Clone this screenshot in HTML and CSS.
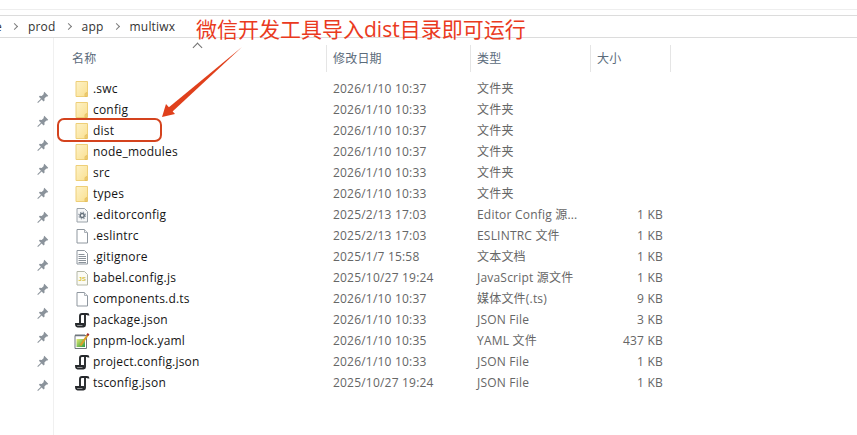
FILE: index.html
```html
<!DOCTYPE html>
<html lang="en">
<head>
    <meta charset="UTF-8">
    <meta name="viewport" content="width=device-width, initial-scale=1.0">
    <title>multiwx</title>
    <link rel="stylesheet" href="styles.css">
</head>
<body>

<svg class="defs" aria-hidden="true">
    <defs>
        <linearGradient id="folder-fill" x1="0" y1="0" x2="1" y2="1">
            <stop offset="0" stop-color="#fdf2c8"/>
            <stop offset="1" stop-color="#fae090"/>
        </linearGradient>
        <linearGradient id="note-fill" x1="0" y1="0" x2="1" y2="1">
            <stop offset="0" stop-color="#e2ec70"/>
            <stop offset="1" stop-color="#2f9a45"/>
        </linearGradient>
        <symbol id="i-folder" viewBox="0 0 16 16">
            <path d="M1.500 .5h11.500v15h-11.500z" fill="url(#folder-fill)" stroke="#eecf78"/>
            <path d="M12.500 11.500v4h-2v-3z" fill="#f2d27c" stroke="#e3bd5c" stroke-width=".8"/>
        </symbol>
        <symbol id="i-doc" viewBox="0 0 16 16">
            <path d="M2.500 1.500h7.500l3 3v10.500h-10.500z" fill="#fff" stroke="#8f979f"/>
            <path d="M10 1.500v3h3" fill="#eef0f2" stroke="#aab0b6"/>
        </symbol>
        <symbol id="i-text" viewBox="0 0 16 16">
            <path d="M2.500 1.500h7.500l3 3v10.500h-10.500z" fill="#fff" stroke="#8f979f"/>
            <path d="M4 5.500h6M4 7.500h7.500M4 9.500h7.500M4 11.500h7.500M4 13.500h7.500" stroke="#8a929a"/>
        </symbol>
        <symbol id="i-gear" viewBox="0 0 16 16">
            <path d="M2.500 1.500h7.500l3 3v10.500h-10.500z" fill="#f6f7f8" stroke="#9aa2a9"/>
            <circle cx="7.700" cy="8.500" r="2" fill="none" stroke="#66717c" stroke-width="1.500"/>
            <circle cx="7.700" cy="8.500" r="3.400" fill="none" stroke="#8a95a0" stroke-width="1.100" stroke-dasharray="1.300 1.400"/>
        </symbol>
        <symbol id="i-js" viewBox="0 0 16 16">
            <path d="M2.500 1.500h7.500l3 3v10.500h-10.500z" fill="#fbfbf4" stroke="#b4b8a8"/>
            <text x="7.800" y="11" class="js-mark">JS</text>
        </symbol>
        <symbol id="i-json" viewBox="0 0 16 16">
            <path d="M5.500 11.500v-7.500q0-2 2-2h5q1.500 0 1.500 1.500" fill="none" stroke="#26292c" stroke-width="1.900"/>
            <path d="M10.500 2.500v10.500q0 1.500-1.500 1.500h-6q-1.500 0-1.500-2.500h7q0 1 1 1" fill="#fff" stroke="#26292c" stroke-width="1.900"/>
        </symbol>
        <symbol id="i-yaml" viewBox="0 0 16 16">
            <path d="M.5 2.500h11.500v13h-11.500z" fill="#fff" stroke="#6f767c"/>
            <path d="M1.500 1v2.500M3.500 1v2.500M5.500 1v2.500M7.500 1v2.500M9.500 1v2.500" stroke="#6f767c"/>
            <path d="M2 6h8.500v8h-8.500z" fill="url(#note-fill)"/>
            <path d="M6 12.500l7.500-11" stroke="#d9a02c" stroke-width="2.200"/>
            <path d="M12.800 2.500l1.200-1.800" stroke="#a52c2c" stroke-width="2.200"/>
        </symbol>
        <symbol id="i-pin" viewBox="0 0 12 12">
            <path d="M7.300.8l3.900 3.900-1.100 1-.7-.2-2 2.100.2 1.900-1 .9-2-2-3.600 3.600-.7-.7 3.600-3.600-2-2 .9-1 1.900.2 2.100-2-.2-.7z" fill="#8b939b"/>
        </symbol>
    </defs>
</svg>

<div class="ribbon"></div>
<div class="tabs-gap"></div>
<div class="crumbs">
    <span>e</span><span class="sep"></span>
    <span>prod</span><span class="sep"></span>
    <span>app</span><span class="sep"></span>
    <span>multiwx</span>
</div>

<div class="main">
    <div class="quick">
        <svg class="pin"><use href="#i-pin"/></svg>
        <svg class="pin"><use href="#i-pin"/></svg>
        <svg class="pin"><use href="#i-pin"/></svg>
        <svg class="pin"><use href="#i-pin"/></svg>
        <svg class="pin"><use href="#i-pin"/></svg>
        <svg class="pin"><use href="#i-pin"/></svg>
        <svg class="pin"><use href="#i-pin"/></svg>
        <svg class="pin"><use href="#i-pin"/></svg>
        <svg class="pin"><use href="#i-pin"/></svg>
        <svg class="pin"><use href="#i-pin"/></svg>
        <svg class="pin"><use href="#i-pin"/></svg>
        <svg class="pin"><use href="#i-pin"/></svg>
        <svg class="pin"><use href="#i-pin"/></svg>
    </div>

    <div class="list">
        <div class="head">
            <div class="head-cell first">名称<span class="caret"></span></div>
            <div class="head-cell">修改日期</div>
            <div class="head-cell">类型</div>
            <div class="head-cell">大小</div>
            <div class="head-cell end"></div>
        </div>

        <div class="row"><div class="name"><svg class="ico"><use href="#i-folder"/></svg>.swc</div><div>2026/1/10 10:37</div><div>文件夹</div><div class="size"></div></div>
        <div class="row"><div class="name"><svg class="ico"><use href="#i-folder"/></svg>config</div><div>2026/1/10 10:33</div><div>文件夹</div><div class="size"></div></div>
        <div class="row"><div class="name"><svg class="ico"><use href="#i-folder"/></svg>dist</div><div>2026/1/10 10:37</div><div>文件夹</div><div class="size"></div></div>
        <div class="row"><div class="name"><svg class="ico"><use href="#i-folder"/></svg>node_modules</div><div>2026/1/10 10:37</div><div>文件夹</div><div class="size"></div></div>
        <div class="row"><div class="name"><svg class="ico"><use href="#i-folder"/></svg>src</div><div>2026/1/10 10:33</div><div>文件夹</div><div class="size"></div></div>
        <div class="row"><div class="name"><svg class="ico"><use href="#i-folder"/></svg>types</div><div>2026/1/10 10:33</div><div>文件夹</div><div class="size"></div></div>
        <div class="row"><div class="name"><svg class="ico"><use href="#i-gear"/></svg>.editorconfig</div><div>2025/2/13 17:03</div><div>Editor Config 源...</div><div class="size">1 KB</div></div>
        <div class="row"><div class="name"><svg class="ico"><use href="#i-doc"/></svg>.eslintrc</div><div>2025/2/13 17:03</div><div>ESLINTRC 文件</div><div class="size">1 KB</div></div>
        <div class="row"><div class="name"><svg class="ico"><use href="#i-text"/></svg>.gitignore</div><div>2025/1/7 15:58</div><div>文本文档</div><div class="size">1 KB</div></div>
        <div class="row"><div class="name"><svg class="ico"><use href="#i-js"/></svg>babel.config.js</div><div>2025/10/27 19:24</div><div>JavaScript 源文件</div><div class="size">1 KB</div></div>
        <div class="row"><div class="name"><svg class="ico"><use href="#i-doc"/></svg>components.d.ts</div><div>2026/1/10 10:37</div><div>媒体文件(.ts)</div><div class="size">9 KB</div></div>
        <div class="row"><div class="name"><svg class="ico"><use href="#i-json"/></svg>package.json</div><div>2026/1/10 10:33</div><div>JSON File</div><div class="size">3 KB</div></div>
        <div class="row"><div class="name"><svg class="ico"><use href="#i-yaml"/></svg>pnpm-lock.yaml</div><div>2026/1/10 10:35</div><div>YAML 文件</div><div class="size">437 KB</div></div>
        <div class="row"><div class="name"><svg class="ico"><use href="#i-json"/></svg>project.config.json</div><div>2026/1/10 10:33</div><div>JSON File</div><div class="size">1 KB</div></div>
        <div class="row"><div class="name"><svg class="ico"><use href="#i-json"/></svg>tsconfig.json</div><div>2025/10/27 19:24</div><div>JSON File</div><div class="size">1 KB</div></div>
    </div>
</div>

<!-- red annotation drawn over the screenshot -->
<div class="note">微信开发工具导入dist目录即可运行</div>
<div class="ring"></div>
<svg class="arrow" width="100" height="90" viewBox="0 0 100 90">
    <path d="M89 1L15 62 19 66z" fill="#e0401c"/>
    <path d="M9 71L13 58 22 68z" fill="#e0401c"/>
</svg>

</body>
</html>
```

FILE: styles.css
```css
body {
    font-family: "Open Sans", "Noto Sans CJK SC", sans-serif;
    font-size: 12px;
    letter-spacing: .2px;
    margin: 0;
    height: 435px;
    overflow: hidden;
    background-color: #fff;
    color: #1e1e1e;
}

.defs {
    position: absolute;
    width: 0;
    height: 0;
}

.js-mark {
    font-family: "Liberation Sans", sans-serif;
    font-size: 6px;
    font-weight: bold;
    fill: #d6bf3a;
    text-anchor: middle;
}

.ribbon {
    height: 9px;
    border-bottom: 1px solid #eeeeee;
}

.tabs-gap {
    height: 5px;
    border-bottom: 1px solid #dcdcdc;
}

.crumbs {
    display: flex;
    align-items: center;
    gap: 10.500px;
    height: 21px;
    margin-left: -5px;
    color: #333;
    border-bottom: 1px solid #dcdcdc;
}

.sep {
    width: 4px;
    height: 4px;
    border-top: 1.500px solid #7d7d7d;
    border-right: 1.500px solid #7d7d7d;
    transform: rotate(45deg);
}

.main {
    display: flex;
}

.quick {
    display: flex;
    flex-direction: column;
    align-items: flex-end;
    gap: 12px;
    box-sizing: border-box;
    width: 54px;
    height: 397px;
    padding: 53px 4px 0 0;
    border-right: 1px solid #f0f0f0;
}

.pin {
    width: 12px;
    height: 12px;
}

.list {
    flex: 1;
}

.head {
    display: grid;
    grid-template-columns: 272px 144px 120px 80px 1px;
    height: 27px;
    margin: 7px 0 6px;
    color: #5b6b7b;
}

.head-cell {
    position: relative;
    padding-left: 6px;
    line-height: 27px;
    border-left: 1px solid #e5e5e5;
}

.head-cell.first {
    padding-left: 18px;
    border-left: none;
}

.head-cell.end {
    padding-left: 0;
}

.caret {
    position: absolute;
    left: 140px;
    top: -1px;
    width: 6px;
    height: 6px;
    border-top: 1px solid #707070;
    border-left: 1px solid #707070;
    transform: rotate(45deg);
}

.row {
    display: grid;
    grid-template-columns: 272px 144px 120px 80px;
    height: 21px;
    line-height: 21px;
    color: #666;
}

.row > div {
    padding-left: 7px;
    white-space: nowrap;
}

.row > .name {
    display: flex;
    align-items: center;
    gap: 2px;
    padding-left: 20px;
    color: #151515;
}

.ico {
    width: 17px;
    height: 16px;
}

.row > .size {
    padding: 0 7px 0 0;
    text-align: right;
}

.note {
    position: absolute;
    left: 196px;
    top: 15px;
    font-size: 21px;
    line-height: 28px;
    letter-spacing: 0;
    color: #ea3a1e;
}

.ring {
    position: absolute;
    left: 57px;
    top: 118px;
    width: 101px;
    height: 20px;
    border: 2px solid #d4431e;
    border-radius: 7px;
}

.arrow {
    position: absolute;
    left: 153px;
    top: 46px;
}
```
